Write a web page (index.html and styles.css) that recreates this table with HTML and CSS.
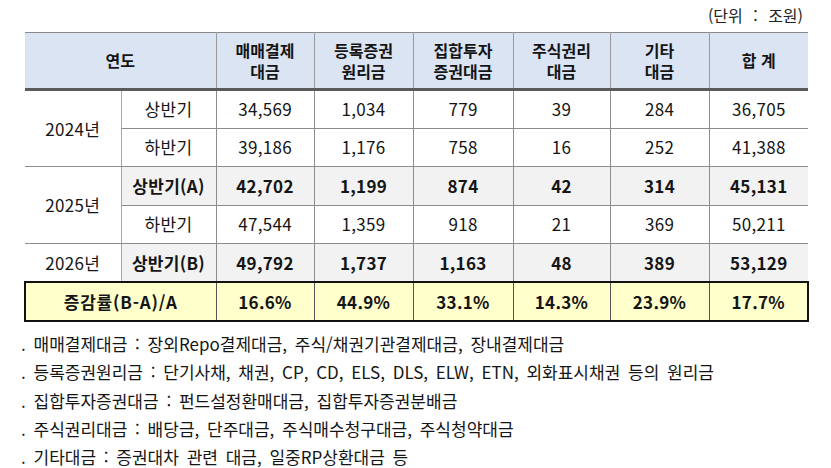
FILE: index.html
```html
<!DOCTYPE html>
<html lang="ko">
<head>
<meta charset="utf-8">
<title>대금 현황</title>
<link rel="stylesheet" href="styles.css">
</head>
<body>
<div class="page">
  <div class="unit">(단위 : 조원)</div>
  <table class="data">
    <colgroup>
      <col class="c-year"><col class="c-half"><col class="c1"><col class="c2"><col class="c3"><col class="c4"><col class="c5"><col class="c6">
    </colgroup>
    <thead>
      <tr>
        <th colspan="2">연도</th>
        <th>매매결제<br>대금</th>
        <th>등록증권<br>원리금</th>
        <th>집합투자<br>증권대금</th>
        <th>주식권리<br>대금</th>
        <th>기타<br>대금</th>
        <th>합 계</th>
      </tr>
    </thead>
    <tbody>
      <tr>
        <td class="year" rowspan="2">2024년</td>
        <td class="half">상반기</td>
        <td>34,569</td><td>1,034</td><td>779</td><td>39</td><td>284</td><td>36,705</td>
      </tr>
      <tr>
        <td class="half">하반기</td>
        <td>39,186</td><td>1,176</td><td>758</td><td>16</td><td>252</td><td>41,388</td>
      </tr>
      <tr class="em">
        <td class="year" rowspan="2">2025년</td>
        <td class="half">상반기(A)</td>
        <td>42,702</td><td>1,199</td><td>874</td><td>42</td><td>314</td><td>45,131</td>
      </tr>
      <tr>
        <td class="half">하반기</td>
        <td>47,544</td><td>1,359</td><td>918</td><td>21</td><td>369</td><td>50,211</td>
      </tr>
      <tr class="em">
        <td class="year">2026년</td>
        <td class="half">상반기(B)</td>
        <td>49,792</td><td>1,737</td><td>1,163</td><td>48</td><td>389</td><td>53,129</td>
      </tr>
      <tr class="rate">
        <td colspan="2">증감률(B-A)/A</td>
        <td>16.6%</td><td>44.9%</td><td>33.1%</td><td>14.3%</td><td>23.9%</td><td>17.7%</td>
      </tr>
    </tbody>
  </table>
  <ul class="notes">
    <li>. 매매결제대금 : 장외Repo결제대금, 주식/채권기관결제대금, 장내결제대금</li>
    <li>. 등록증권원리금 : 단기사채, 채권, CP, CD, ELS, DLS, ELW, ETN, 외화표시채권 등의 원리금</li>
    <li>. 집합투자증권대금 : 펀드설정환매대금, 집합투자증권분배금</li>
    <li>. 주식권리대금 : 배당금, 단주대금, 주식매수청구대금, 주식청약대금</li>
    <li>. 기타대금 : 증권대차 관련 대금, 일중RP상환대금 등</li>
  </ul>
</div>
</body>
</html>
```
FILE: styles.css
```css
* { box-sizing: border-box; }
html, body { margin: 0; padding: 0; background: #fff; }
body {
  font-family: "Noto Sans CJK KR", "Noto Sans", sans-serif;
  color: #151515;
  width: 831px;
  height: 468px;
  overflow: hidden;
}
.page { padding: 0 0 0 24px; }
.unit {
  width: 779px;
  height: 32px;
  text-align: right;
  font-size: 16px;
  word-spacing: 6px;
  line-height: 30px;
  color: #222;
}
.data {
  border-collapse: collapse;
  table-layout: fixed;
  width: 783px;
  font-size: 17px;
}
.c-year { width: 96px; }
.c-half { width: 95px; }
.c1 { width: 98px; }
.c2 { width: 99px; }
.c3 { width: 100px; }
.c4 { width: 97px; }
.c5 { width: 99px; }
.c6 { width: 99px; }
.data th {
  background: #dbe4f3;
  font-weight: 700;
  font-size: 16px;
  line-height: 21px;
  height: 57px;
  padding: 0;
  border-top: 1px solid #8a8a8a;
  border-left: 1px solid #9a9a9a;
  border-right: 1px solid #9a9a9a;
  border-bottom: 3px solid #5a5a5a;
  text-align: center;
}
.data th:first-child { border-left: none; }
.data th:last-child { border-right: none; }
.data td {
  height: 38.5px;
  padding: 0;
  text-align: center;
  font-weight: 400;
  letter-spacing: 0.3px;
  border: 1px solid #8c8c8c;
  line-height: 20px;
}
.data td:first-child { border-left: none; }
.data td:last-child { border-right: none; }
.data td.year { background: #fff; border-right: 1px solid #a6a6a6; }
.data tr.em td { background: #f2f2f2; font-weight: 700; }
.data tr.em td.year { background: #fff; font-weight: 400; }
.data tr.rate td {
  background: #ffffcc;
  font-weight: 700;
  height: 39px;
  border-top: 2px solid #111;
  border-bottom: 2px solid #111;
  border-left: 1px solid #555;
  border-right: 1px solid #555;
}
.data tr.rate td:first-child { border-left: 2px solid #111; letter-spacing: 0.8px; }
.data tr.rate td:last-child { border-right: 2px solid #111; }
.notes {
  list-style: none;
  margin: 8px 0 0 -3px;
  padding: 0;
  font-size: 17px;
  word-spacing: 3px;
  line-height: 28.3px;
  color: #151515;
}
.notes li { white-space: nowrap; }
```
